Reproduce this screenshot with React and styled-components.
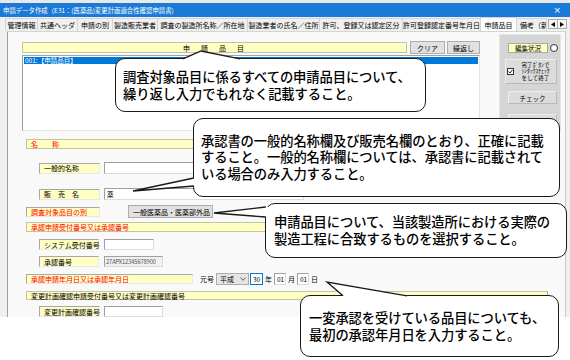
import React from 'react';
import styled, { createGlobalStyle } from 'styled-components';

const Global = createGlobalStyle`
  html, body { margin: 0; padding: 0; background: #fff; }
  body { font-family: "Noto Sans CJK JP", "Noto Sans", sans-serif; }
  * { box-sizing: border-box; }
`;

const Page = styled.div`
  position: relative;
  width: 570px;
  height: 360px;
  background: #fff;
  overflow: hidden;
  font-family: "Noto Sans CJK JP", "Noto Sans", sans-serif;
`;

const Window = styled.div`
  width: 570px;
  height: 317px;
  background: #f0f0f0;
  display: flex;
  flex-direction: column;
`;

const TopStrip = styled.div`
  height: 3px;
  background: #e9e9e9;
`;

const TitleBar = styled.div`
  height: 14px;
  background: #1a7ad6;
  color: #fff;
  display: flex;
  align-items: center;
  justify-content: space-between;
  padding: 0 9px 0 3px;
  font-size: 6.4px;
  white-space: nowrap;
`;

const Close = styled.span`
  font-family: "DejaVu Sans", sans-serif;
  font-size: 9px;
  line-height: 1;
`;

const TabRow = styled.div`
  height: 14px;
  display: flex;
  align-items: flex-end;
  padding-left: 6px;
`;

const Tab = styled.div`
  width: ${p => p.$w}px;
  height: ${p => (p.$active ? 14 : 13)}px;
  margin-left: -1px;
  border: 1px solid #d4d4d4;
  border-bottom: none;
  background: ${p => (p.$active ? '#fff' : '#f0f0f0')};
  font-size: 7px;
  color: #000;
  display: flex;
  align-items: center;
  justify-content: ${p => (p.$cut ? 'flex-start' : 'center')};
  padding-left: ${p => (p.$cut ? 3 : 0)}px;
  white-space: nowrap;
  overflow: hidden;
  position: relative;
  z-index: ${p => (p.$active ? 1 : 0)};
`;

const Arrows = styled.div`
  display: flex;
  margin-left: 2px;
  margin-bottom: 2px;
`;

const ArrowBtn = styled.div`
  width: 10px;
  height: 10px;
  border: 1px solid #adadad;
  background: #f5f5f5;
  margin-left: -1px;
  display: flex;
  align-items: center;
  justify-content: center;
`;

const TabPage = styled.div`
  flex: 1;
  margin: 0 4px 0 7px;
  background: #f9f9f9;
  border-left: 1px solid #a0a0a0;
  border-top: 1px solid #d4d4d4;
  border-right: 1px solid #c8c8c8;
  display: flex;
  flex-direction: column;
  overflow: hidden;
`;

const TopRow = styled.div`
  display: flex;
  align-items: flex-start;
  padding-left: 14px;
  height: 100px;
`;

const LeftCol = styled.div`
  width: 458px;
  padding-top: 9px;
  display: flex;
  flex-direction: column;
  gap: 1px;
`;

const HeaderRow = styled.div`
  display: flex;
  align-items: center;
  height: 13px;
  gap: 2px;
`;

const HeadBar = styled.div`
  width: 386px;
  height: 11px;
  margin-right: 1px;
  background: #ffffc4;
  border: 1px solid #c4c4a0;
  font-size: 7px;
  display: flex;
  align-items: center;
  justify-content: center;
  letter-spacing: 2px;
  color: #000;
`;

const SmallButton = styled.div`
  width: ${p => p.$w}px;
  height: 13px;
  background: #e1e1e1;
  border: 1px solid #adadad;
  font-size: 7px;
  display: flex;
  align-items: center;
  justify-content: center;
  color: #000;
`;

const ListBox = styled.div`
  height: 76px;
  background: #fff;
  border: 1px solid #a0a0a0;
  border-right-color: #e3e3e3;
  border-bottom-color: #e3e3e3;
  padding: 1px;
`;

const ListItem = styled.div`
  height: 7px;
  background: ${p => (p.$selected ? '#0078d7' : 'transparent')};
  color: ${p => (p.$selected ? '#fff' : '#000')};
  font-size: 6.5px;
  line-height: 7px;
  padding-left: 1px;
  white-space: nowrap;
`;

const SidePanel = styled.div`
  margin-left: 19px;
  margin-top: 2px;
  width: 62px;
  height: 98px;
  background: #d5d5d5;
  border: 1px solid #e6e6e6;
  padding: 8px 0 0 5px;
  display: flex;
  flex-direction: column;
`;

const StatusRow = styled.div`
  display: flex;
  align-items: center;
  gap: 2px;
  margin-left: 3px;
`;

const StatusLabel = styled.div`
  width: 40px;
  height: 10px;
  background: #ffffc4;
  border: 1px solid #a8a8a8;
  font-size: 6.5px;
  display: flex;
  align-items: center;
  justify-content: center;
  color: #000;
`;

const RadioDot = styled.div`
  width: 8px;
  height: 8px;
  border-radius: 50%;
  border: 1px solid #333;
  background: #fff;
`;

const CheckButton = styled.div`
  margin-top: 6px;
  width: 52px;
  height: 25px;
  background: #dcdcdc;
  border: 1px solid #ededed;
  border-right-color: #b8b8b8;
  border-bottom-color: #b8b8b8;
  display: flex;
  align-items: center;
  padding-left: 1px;
  gap: 1px;
`;

const CheckBox = styled.div`
  width: 7px;
  height: 7px;
  border: 1px solid #333;
  background: #fff;
  flex-shrink: 0;
  display: flex;
  align-items: center;
  justify-content: center;
`;

const CheckText = styled.div`
  font-size: 5.6px;
  line-height: 6.6px;
  text-align: center;
  color: #000;
  white-space: nowrap;
  flex: 1;
`;

const PanelButton = styled.div`
  margin-top: ${p => p.$mt}px;
  margin-left: 3px;
  width: 49px;
  height: 13px;
  background: #dcdcdc;
  border: 1px solid #ededed;
  border-right-color: #b8b8b8;
  border-bottom-color: #b8b8b8;
  font-size: 6.5px;
  display: flex;
  align-items: center;
  justify-content: center;
  color: #000;
`;

const FormSection = styled.div`
  padding: 7px 0 0 18px;
  display: flex;
  flex-direction: column;
`;

const SectionBar = styled.div`
  margin-top: ${p => p.$mt || 0}px;
  width: 522px;
  height: ${p => p.$h || 10}px;
  background: #ffffc4;
  border: 1px solid #c4c4a4;
  border-right-color: #a8a8a8;
  font-size: 7px;
  color: ${p => (p.$red ? '#ff0000' : '#000')};
  display: flex;
  align-items: center;
  padding-left: 4px;
  white-space: nowrap;
`;

const FieldRow = styled.div`
  margin-top: ${p => p.$mt}px;
  height: ${p => p.$h || 12}px;
  display: flex;
  align-items: center;
  padding-left: ${p => (p.$indent ? 13 : 0)}px;
`;

const FieldLabel = styled.div`
  width: ${p => p.$w}px;
  height: ${p => p.$h || 11}px;
  background: #ffffc4;
  border: 1px solid #a8a8a8;
  border-right-color: #e8e8e8;
  border-bottom-color: #e8e8e8;
  font-size: 7px;
  color: ${p => (p.$red ? '#ff0000' : '#000')};
  display: flex;
  align-items: center;
  padding-left: 4px;
  white-space: nowrap;
  flex-shrink: 0;
`;

const TextInput = styled.div`
  margin-left: ${p => (p.$ml == null ? 4 : p.$ml)}px;
  width: ${p => p.$w}px;
  height: ${p => p.$h || 12}px;
  background: ${p => (p.$disabled ? '#f0f0f0' : '#fff')};
  border: 1px solid ${p => (p.$focus ? '#0078d7' : '#a0a0a0')};
  ${p => (p.$focus ? '' : 'border-right-color: #dcdcdc; border-bottom-color: #dcdcdc;')}
  font-size: ${p => p.$fs || 6.5}px;
  color: ${p => (p.$disabled ? '#555' : '#000')};
  display: flex;
  align-items: center;
  padding-left: ${p => (p.$disabled ? 1 : 2)}px;
  letter-spacing: ${p => (p.$disabled ? '-0.15px' : '0')};
  white-space: nowrap;
  overflow: hidden;
  flex-shrink: 0;
`;

const ComboButton = styled.div`
  margin-left: 28px;
  width: 85px;
  height: 13px;
  background: #e1e1e1;
  border: 1px solid #adadad;
  font-size: 7px;
  color: #000;
  display: flex;
  align-items: center;
  padding-left: 4px;
  white-space: nowrap;
`;

const UnitText = styled.span`
  font-size: 7px;
  color: #000;
  margin: 0 ${p => p.$mr || 2}px 0 ${p => p.$ml || 2}px;
  white-space: nowrap;
`;

const EraSelect = styled.div`
  width: 33px;
  height: 12px;
  background: #e5e5e5;
  border: 1px solid #adadad;
  font-size: 7px;
  color: #000;
  display: flex;
  align-items: center;
  justify-content: space-between;
  padding: 0 2px 0 3px;
`;

const Bubble = styled.div`
  position: absolute;
  left: ${p => p.$x}px;
  top: ${p => p.$y}px;
  width: ${p => p.$w}px;
  height: ${p => p.$h}px;
  background: #fff;
  border: 1.5px solid #1a1a1a;
  border-radius: 10px;
  padding-left: ${p => p.$pl || 7}px;
  display: flex;
  flex-direction: column;
  justify-content: center;
  font-size: 13.3px;
  font-weight: 500;
  line-height: ${p => p.$lh || 16.5}px;
  color: #000;
  white-space: nowrap;
  letter-spacing: -0.1px;
`;

const TailLayer = styled.svg`
  position: absolute;
  left: 0;
  top: 0;
  pointer-events: none;
`;

const tabs = [
  { t: '管理情報', w: 33 },
  { t: '共通ヘッダ', w: 41 },
  { t: '申請の別', w: 36 },
  { t: '製造販売業者', w: 46 },
  { t: '調査の製造所名称／所在地', w: 91 },
  { t: '製造業者の氏名／住所', w: 73 },
  { t: '許可、登録又は認定区分', w: 84 },
  { t: '許可登録認定番号年月日', w: 79 },
  { t: '申請品目', w: 37, active: true },
  { t: '備考（新規', w: 31, cut: true },
];

const tails = [
  { apex: [201, 51], a: [183, 58.8], b: [240, 58.8], pad: [0, 3] },
  { apex: [133, 191], a: [193.8, 178], b: [193.8, 186], pad: [3, 0] },
  { apex: [214, 213], a: [265.8, 207], b: [265.8, 217], pad: [3, 0] },
  { apex: [327, 282], a: [343, 295.8], b: [407, 295.8], pad: [0, 3] },
];

function Tails() {
  return (
    <TailLayer width="570" height="360" viewBox="0 0 570 360">
      {tails.map((t, i) => {
        const [ax, ay] = t.apex;
        const [x1, y1] = t.a;
        const [x2, y2] = t.b;
        const [px, py] = t.pad;
        const fill = `${x1},${y1} ${ax},${ay} ${x2},${y2} ${x2 + px},${y2 + py} ${x1 + px},${y1 + py}`;
        return (
          <g key={i}>
            <polygon points={fill} fill="#fff" stroke="none" />
            <polyline points={`${x1},${y1} ${ax},${ay} ${x2},${y2}`} fill="none" stroke="#1a1a1a" strokeWidth="1.3" strokeLinejoin="miter" />
          </g>
        );
      })}
    </TailLayer>
  );
}

export default function App() {
  return (
    <Page>
      <Global />
      <Window>
        <TopStrip />
        <TitleBar>
          <span>申請データ作成（E31：(医薬品)変更計画適合性確認申請書)</span>
          <Close>×</Close>
        </TitleBar>
        <TabRow>
          {tabs.map(t => (
            <Tab key={t.t} $w={t.w} $active={t.active} $cut={t.cut}>{t.t}</Tab>
          ))}
          <Arrows>
            <ArrowBtn>
              <svg width="4" height="5" viewBox="0 0 4 5"><polygon points="4,0 0,2.5 4,5" fill="#000" /></svg>
            </ArrowBtn>
            <ArrowBtn>
              <svg width="4" height="5" viewBox="0 0 4 5"><polygon points="0,0 4,2.5 0,5" fill="#000" /></svg>
            </ArrowBtn>
          </Arrows>
        </TabRow>
        <TabPage>
          <TopRow>
            <LeftCol>
              <HeaderRow>
                <HeadBar>申　請　品　目</HeadBar>
                <SmallButton $w={35}>クリア</SmallButton>
                <SmallButton $w={33}>繰返し</SmallButton>
              </HeaderRow>
              <ListBox>
                <ListItem $selected>001:【申請品目】</ListItem>
              </ListBox>
            </LeftCol>
            <SidePanel>
              <StatusRow>
                <StatusLabel>編集状況</StatusLabel>
                <RadioDot />
              </StatusRow>
              <CheckButton>
                <CheckBox>
                  <svg width="5" height="5" viewBox="0 0 5 5"><polyline points="0.5,2.5 2,4 4.5,0.8" fill="none" stroke="#000" strokeWidth="0.9" /></svg>
                </CheckBox>
                <CheckText>完了ﾎﾞﾀﾝで<br />ｼﾝﾀｯｸｽﾁｪｯｸ<br />をして終了</CheckText>
              </CheckButton>
              <PanelButton $mt={7}>チェック</PanelButton>
              <PanelButton $mt={10}>編集前に戻す</PanelButton>
            </SidePanel>
          </TopRow>
          <FormSection>
            <SectionBar $red>名　　称</SectionBar>
            <FieldRow $mt={13} $indent>
              <FieldLabel $w={61}>一般的名称</FieldLabel>
              <TextInput $w={200} />
            </FieldRow>
            <FieldRow $mt={14} $indent>
              <FieldLabel $w={61}>販　売　名</FieldLabel>
              <TextInput $w={200}>薬</TextInput>
            </FieldRow>
            <FieldRow $mt={5} $h={13}>
              <FieldLabel $w={74} $h={10} $red>調査対象品目の別</FieldLabel>
              <ComboButton>一般医薬品・医薬部外品</ComboButton>
            </FieldRow>
            <SectionBar $mt={4} $red>承認申請受付番号又は承認番号</SectionBar>
            <FieldRow $mt={7} $h={11} $indent>
              <FieldLabel $w={60}>システム受付番号</FieldLabel>
              <TextInput $w={50} $h={11} $ml={5} />
            </FieldRow>
            <FieldRow $mt={6} $h={11} $indent>
              <FieldLabel $w={60}>承認番号</FieldLabel>
              <TextInput $w={59} $h={11} $ml={5} $fs={5.8} $disabled>27APX12345678900</TextInput>
            </FieldRow>
            <FieldRow $mt={6} $h={12}>
              <FieldLabel $w={167} $h={10} $red>承認申請年月日又は承認年月日</FieldLabel>
              <UnitText $ml={7} $mr={2}>元号</UnitText>
              <EraSelect>
                <span>平成</span>
                <svg width="6" height="4" viewBox="0 0 6 4"><polyline points="0.5,0.5 3,3.3 5.5,0.5" fill="none" stroke="#444" strokeWidth="0.8" /></svg>
              </EraSelect>
              <TextInput $w={13} $ml={1} $focus>30</TextInput>
              <UnitText>年</UnitText>
              <TextInput $w={12} $ml={0}>01</TextInput>
              <UnitText>月</UnitText>
              <TextInput $w={12} $ml={0}>01</TextInput>
              <UnitText>日</UnitText>
            </FieldRow>
            <SectionBar $mt={6} $h={9}>変更計画確認申請受付番号又は変更計画確認番号</SectionBar>
            <FieldRow $mt={6} $h={11} $indent>
              <FieldLabel $w={61}>変更計画確認番号</FieldLabel>
              <TextInput $w={59} $h={11} $ml={4} />
            </FieldRow>
          </FormSection>
        </TabPage>
      </Window>

      <Bubble $x={115} $y={58} $w={311} $h={54} $lh={17}>
        <div>調査対象品目に係るすべての申請品目について、</div>
        <div>繰り返し入力でもれなく記載すること。</div>
      </Bubble>
      <Bubble $x={193} $y={118} $w={367} $h={79}>
        <div>承認書の一般的名称欄及び販売名欄のとおり、正確に記載</div>
        <div>すること。一般的名称欄については、承認書に記載されて</div>
        <div>いる場合のみ入力すること。</div>
      </Bubble>
      <Bubble $x={265} $y={203} $w={302} $h={55} $pl={8}>
        <div>申請品目について、当該製造所における実際の</div>
        <div>製造工程に合致するものを選択すること。</div>
      </Bubble>
      <Bubble $x={300} $y={295} $w={259} $h={62} $pl={8} $lh={17}>
        <div>一変承認を受けている品目についても、</div>
        <div>最初の承認年月日を入力すること。</div>
      </Bubble>
      <Tails />
    </Page>
  );
}
